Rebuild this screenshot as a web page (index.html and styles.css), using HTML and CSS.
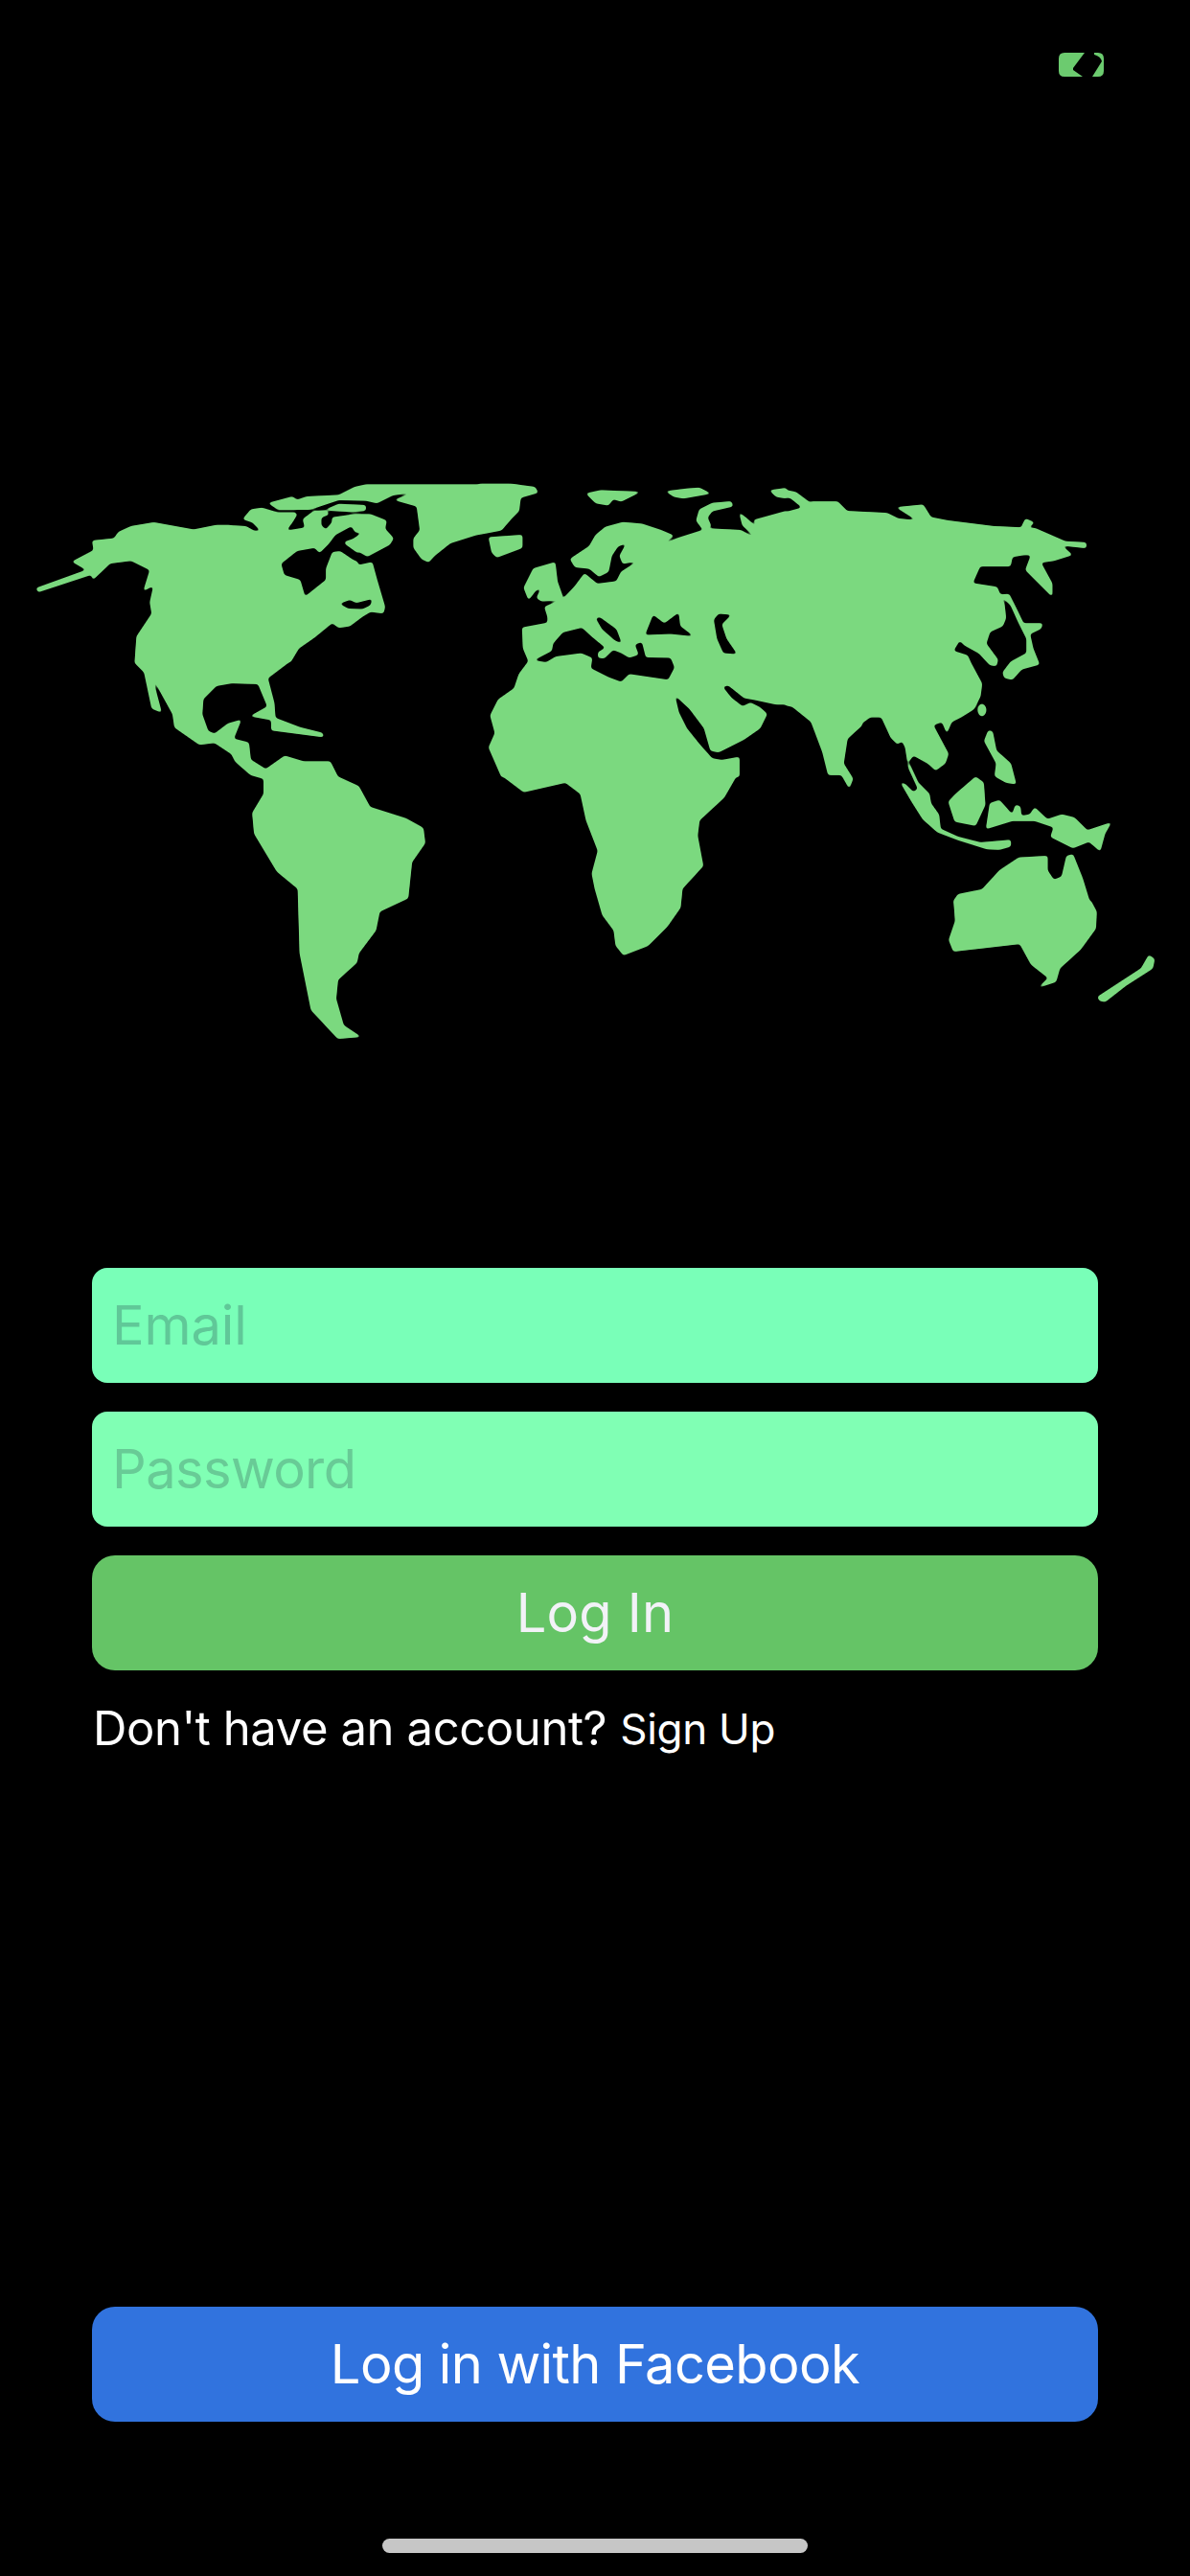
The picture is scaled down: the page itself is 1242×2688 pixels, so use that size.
FILE: index.html
```html
<!DOCTYPE html>
<html lang="en">
<head>
<meta charset="utf-8">
<title>Log In</title>
<link rel="stylesheet" href="styles.css">
</head>
<body>
<main class="screen">
  <header class="status">
    <svg class="battery" viewBox="0 0 47 25" aria-hidden="true">
      <path d="M6,0 H27 L15,16 V18 L25,25 H6 Q0,25 0,19 V6 Q0,0 6,0Z" fill="#6ccb6f"/>
      <path d="M37,0 H41 Q47,0 47,6 V19 Q47,25 41,25 H35 L45,9 Q44,4 37,2Z" fill="#6ccb6f"/>
    </svg>
  </header>
  <svg class="map" viewBox="0 0 3136 1566" aria-label="World map">
    <defs>
      <filter id="smooth" filterUnits="userSpaceOnUse" x="0" y="0" width="3136" height="1566" color-interpolation-filters="sRGB">
        <feGaussianBlur stdDeviation="3.5"/>
        <feColorMatrix values="0 0 0 0 .482  0 0 0 0 .851  0 0 0 0 .498  0 1.176 0 0 0"/>
        <feComponentTransfer><feFuncA type="linear" slope="4" intercept="-1.5"/></feComponentTransfer>
      </filter>
    </defs>
    <g class="art">
      <rect class="sea" width="3136" height="1566"/>
      <g class="land">
        <path d="M95,338 L100,348 L240,302 L245,315 L290,272 L345,265 L395,290 L378,345 L405,330 L395,375 L400,405 L360,465 L355,535 L380,560 L400,655 L425,665 L400,570 L455,670 L460,705 L525,750 L565,745 L610,775 L620,795 L660,830 L695,840 L695,880 L665,930 L670,985 L730,1085 L785,1130 L790,1300 L820,1450 L890,1525 L950,1520 L905,1490 L885,1420 L890,1370 L940,1325 L945,1300 L990,1240 L1000,1190 L1075,1155 L1085,1060 L1120,1010 L1115,970 L1070,945 L975,915 L945,860 L890,835 L870,795 L800,795 L750,780 L700,815 L660,790 L655,745 L615,735 L635,685 L600,695 L565,722 L548,715 L532,670 L535,630 L570,595 L610,588 L680,590 L705,650 L660,675 L715,685 L715,712 L790,722 L852,730 L850,720 L790,705 L725,680 L722,640 L705,575 L765,530 L775,500 L800,480 L606,480 L606,172 L570,172 L510,184 L405,165 L345,175 L312,190 L300,207 L243,213 L247,238 L190,268 L228,290 Z"/>
      </g>
      <g class="east" transform="translate(1568 0)">
        <path class="land-fill" d="M400,140 L420,160 L550,125 L570,110 L640,110 L665,135 L770,140 L800,155 L850,160 L880,150 L930,160 L1050,175 L1160,180 L1240,215 L1295,218 L1295,232 L1230,225 L1258,250 L1210,265 L1175,270 L1205,325 L1205,360 L1170,325 L1135,290 L1150,250 L1130,250 L1100,255 L1095,280 L1015,280 L995,325 L1060,335 L1085,400 L800,500 L800,680 L760,680 L725,680 L665,735 L655,800 L680,840 L670,865 L650,830 L615,830 L600,770 L570,690 L520,650 L450,635 L400,630 Z"/>
        <path class="land-fill" d="M380,782 L380,820 L340,890 L275,950 L270,990 L285,1070 L230,1130 L225,1180 L190,1230 L140,1280 L75,1305 L55,1280 L50,1240 L20,1200 L0,1130 L-8,1090 L8,1030 L-23,950 L-38,880 L-78,850 L-188,875 L-248,830 L-253,760 L-100,700 Z"/>
        <path class="land-fill" d="M460,80 L480,75 L530,85 L570,115 L550,128 L515,100 L470,92 Z"/>
        <path class="land-fill" d="M795,125 L865,118 L885,150 L850,160 Z"/>
        <path class="land-fill" d="M1125,175 L1135,155 L1158,165 L1140,180 Z"/>
        <path class="land-fill" d="M945,1150 L1020,1130 L1075,1080 L1125,1048 L1190,1045 L1190,1085 L1215,1108 L1235,1080 L1245,1040 L1265,1045 L1290,1130 L1322,1190 L1320,1235 L1280,1290 L1225,1340 L1215,1375 L1170,1390 L1195,1365 L1150,1330 L1120,1275 L945,1295 L933,1265 L950,1215 Z"/>
        <path class="land-fill" d="M1330,1425 L1325,1415 L1440,1340 L1460,1305 L1475,1315 L1470,1340 L1400,1385 L1345,1428 Z"/>
      </g>
      <g class="arctic" transform="translate(606 25.25) scale(.8417)">
        <path class="water-fill" d="M0,0 H960 V600 H0 Z"/>
        <path class="land-fill" d="M-2,175 L50,178 L75,192 L97,193 L70,165 L40,155 L65,125 L100,120 L150,135 L205,135 L210,140 L195,165 L175,192 L235,182 L228,155 L262,130 L300,128 L310,140 L285,150 L285,175 L300,188 L320,165 L320,150 L390,140 L440,140 L490,160 L485,185 L512,215 L500,235 L430,272 L400,255 L400,300 L445,290 L460,345 L485,430 L480,450 L440,445 L415,460 L375,490 L340,495 L320,480 L265,525 L215,560 L190,602 L-2,602 Z"/>
        <path class="water-fill" d="M160,295 L210,255 L265,245 L280,262 L310,232 L330,205 L380,178 L392,197 L412,198 L385,217 L360,225 L358,232 L400,262 L404,290 L385,282 L345,255 L320,258 L300,310 L300,345 L235,397 L220,345 L170,330 Z"/>
        <path class="water-fill" d="M343,420 L375,408 L395,418 L445,405 L440,425 L415,437 L370,435 Z"/>
        <path class="land-fill" d="M120,105 L195,85 L210,95 L240,85 L340,80 L390,55 L425,47 L890,47 L955,58 L955,75 L905,92 L905,130 L880,155 L850,190 L770,205 L690,230 L640,270 L622,290 L600,280 L575,245 L575,215 L595,190 L585,115 L515,95 L580,70 L510,80 L460,105 L425,97 L340,95 L250,125 L200,125 L150,125 Z"/>
        <path class="land-fill" d="M300,125 L340,108 L425,112 L425,128 L380,132 L310,128 Z"/>
      </g>
      <g class="europe" transform="translate(1262.5 25.25) scale(.8417)">
        <path class="water-fill" d="M128,0 H960 V960 H0 V640 H128 Z"/>
        <path class="land-fill" d="M285,280 L345,240 L365,205 L395,180 L450,165 L510,170 L570,190 L610,207 L568,238 L620,215 L700,190 L725,185 L820,190 L870,218 L885,210 L860,158 L962,130 L962,735 L930,735 L860,720 L830,715 L780,675 L762,680 L790,715 L825,742 L850,730 L880,745 L902,765 L880,810 L830,845 L750,885 L725,880 L705,810 L660,750 L612,705 L625,760 L650,810 L690,860 L730,905 L760,910 L815,900 L815,962 L70,962 L30,870 L50,825 L35,770 L60,720 L110,685 L125,640 L155,600 L138,560 L135,495 L215,480 L215,462 L205,430 L240,415 L265,402 L300,365 L330,325 L370,358 L430,350 L445,320 L500,285 L450,295 L440,270 L462,230 L435,240 L415,270 L405,320 L375,335 L345,310 L300,305 Z"/>
        <path class="water-fill" d="M172,597 L228,568 L232,545 L262,510 L322,495 L355,525 L395,558 L372,572 L372,590 L392,592 L420,565 L445,575 L470,590 L500,580 L488,548 L510,540 L522,588 L600,590 L612,620 L592,658 L470,640 L445,665 L405,650 L350,622 L355,590 L320,575 L240,585 L210,603 Z"/>
        <path class="water-fill" d="M365,465 L378,462 L430,500 L447,545 L425,535 L385,500 Z"/>
        <path class="water-fill" d="M520,518 L545,455 L580,482 L625,448 L630,490 L672,522 L600,515 Z"/>
        <path class="water-fill" d="M735,470 L750,452 L790,455 L760,485 L775,530 L808,578 L765,575 L745,530 Z"/>
        <path class="land-fill" d="M140,370 L170,310 L238,290 L245,350 L262,398 L235,410 L195,412 L180,402 L195,370 L178,378 L155,408 Z"/>
        <path class="land-fill" d="M335,75 L380,65 L505,70 L445,100 L420,92 L405,112 L365,105 Z"/>
        <path class="land-fill" d="M585,68 L650,60 L690,57 L725,75 L640,90 L610,85 Z"/>
        <path class="land-fill" d="M910,65 L962,58 L962,90 L930,85 Z"/>
        <path class="land-fill" d="M30,212 L135,205 L135,245 L55,275 L40,260 Z"/>
        <path class="land-fill" d="M100,45 L175,55 L185,72 L130,88 L125,125 L90,155 L70,185 L0,200 L0,45 Z"/>
        <path class="land-fill" d="M790,100 L795,115 L730,130 L715,150 L727,178 L700,187 L680,160 L690,125 L730,105 Z"/>
        <path class="land-fill" d="M815,135 L835,150 L880,190 L885,215 L870,217 L825,175 Z"/>
      </g>
      <g class="asia" transform="translate(2272.5 353.5) scale(.8417)">
        <path class="water-fill" d="M0,8 H960 V960 H0 Z"/>
        <path class="land-fill" d="M-2,-2 L430,-2 L445,30 L450,75 L440,100 L400,118 L388,155 L425,205 L420,225 L400,222 L365,185 L320,160 L305,145 L285,178 L330,192 L340,215 L375,280 L370,320 L350,360 L310,385 L280,400 L265,435 L250,400 L222,410 L270,500 L260,530 L230,552 L205,530 L160,505 L145,525 L175,590 L210,625 L215,655 L240,690 L245,735 L300,760 L370,778 L465,770 L465,790 L430,800 L390,798 L300,770 L235,745 L190,705 L155,650 L120,590 L135,595 L160,620 L175,610 L145,545 L135,480 L125,460 L110,470 L90,450 L60,385 L25,385 L-2,405 Z"/>
        <path class="land-fill" d="M430,2 L460,0 L485,50 L505,92 L565,92 L560,108 L525,125 L535,170 L555,220 L500,235 L470,268 L445,262 L440,245 L465,212 L515,185 L515,140 L490,90 L465,35 Z"/>
        <ellipse class="land-fill" cx="375" cy="363" rx="13" ry="19"/>
        <path class="land-fill" d="M395,427 L408,430 L420,490 L465,530 L482,595 L450,590 L415,570 L420,530 L382,460 Z"/>
        <path class="land-fill" d="M355,572 L380,590 L385,660 L355,725 L290,712 L270,650 L290,628 Z"/>
        <path class="land-fill" d="M388,735 L400,655 L430,645 L470,690 L480,660 L495,665 L498,695 L525,690 L540,668 L580,705 L625,690 L665,700 L705,740 L780,715 L760,750 L745,805 L710,775 L660,795 L590,760 L600,730 L540,710 L470,710 Z"/>
        <path class="land-fill" d="M285,962 L300,940 L375,925 L430,865 L490,825 L580,820 L580,865 L600,895 L625,885 L640,820 L660,815 L690,890 L712,962 Z"/>
      </g>
    </g>
  </svg>
  <form class="form">
    <div class="field field-email">Email</div>
    <div class="field field-password">Password</div>
    <button class="btn btn-login" type="button">Log In</button>
    <p class="signup"><span class="signup-q">Don't have an account?</span><a class="signup-link">Sign Up</a></p>
  </form>
  <div class="spacer"></div>
  <button class="btn btn-fb" type="button">Log in with Facebook</button>
  <div class="home"></div>
</main>
</body>
</html>
```
FILE: styles.css
```css
* { box-sizing: border-box; }
html, body { margin: 0; padding: 0; background: #000; }
.screen {
  width: 1242px;
  height: 2688px;
  display: flex;
  flex-direction: column;
  font-family: Inter, "Liberation Sans", sans-serif;
  color: #fff;
  overflow: hidden;
}
.status {
  height: 480px;
  padding: 55px 90px 0 0;
  display: flex;
  justify-content: flex-end;
  align-items: flex-start;
}
.battery { width: 47px; height: 25px; display: block; }
.map { width: 1242px; height: 620px; display: block; }
.art { filter: url(#smooth); }
.sea { fill: #000; }
.land path, .land-fill { fill: #7bd97f; stroke: #7bd97f; stroke-width: 2; stroke-linejoin: round; }
.water-fill { fill: #000; }
.form {
  margin-top: 223px;
  padding: 0 96px;
  display: flex;
  flex-direction: column;
  gap: 30px;
}
.field {
  height: 120px;
  border-radius: 16px;
  padding: 0 21px;
  display: flex;
  align-items: center;
  font-size: 56px;
  letter-spacing: -0.6px;
}
.field-email { background: #79ffb8; color: #60c898; letter-spacing: -0.1px; }
.field-password { background: #80ffb4; color: #68cb96; }
.btn {
  display: flex;
  align-items: center;
  justify-content: center;
  height: 120px;
  border: 0;
  border-radius: 24px;
  font: inherit;
  font-size: 56px;
  letter-spacing: -0.6px;
  color: #f2f2f7;
}
.btn-login { background: #65c466; letter-spacing: 0.2px; }
.btn-fb { background: #3173de; margin: 0 96px; color: #fff; }
.signup {
  margin: 1px 0 0;
  padding-left: 1px;
  display: flex;
  align-items: center;
  gap: 14px;
}
.signup-q { font-size: 49px; letter-spacing: -0.4px; }
.signup-link { font-size: 44px; letter-spacing: -0.3px; }
.spacer { flex: 1; }
.home {
  width: 444px;
  height: 15px;
  margin: 122px auto 24px;
  border-radius: 8px;
  background: #c6c6c6;
}
```
